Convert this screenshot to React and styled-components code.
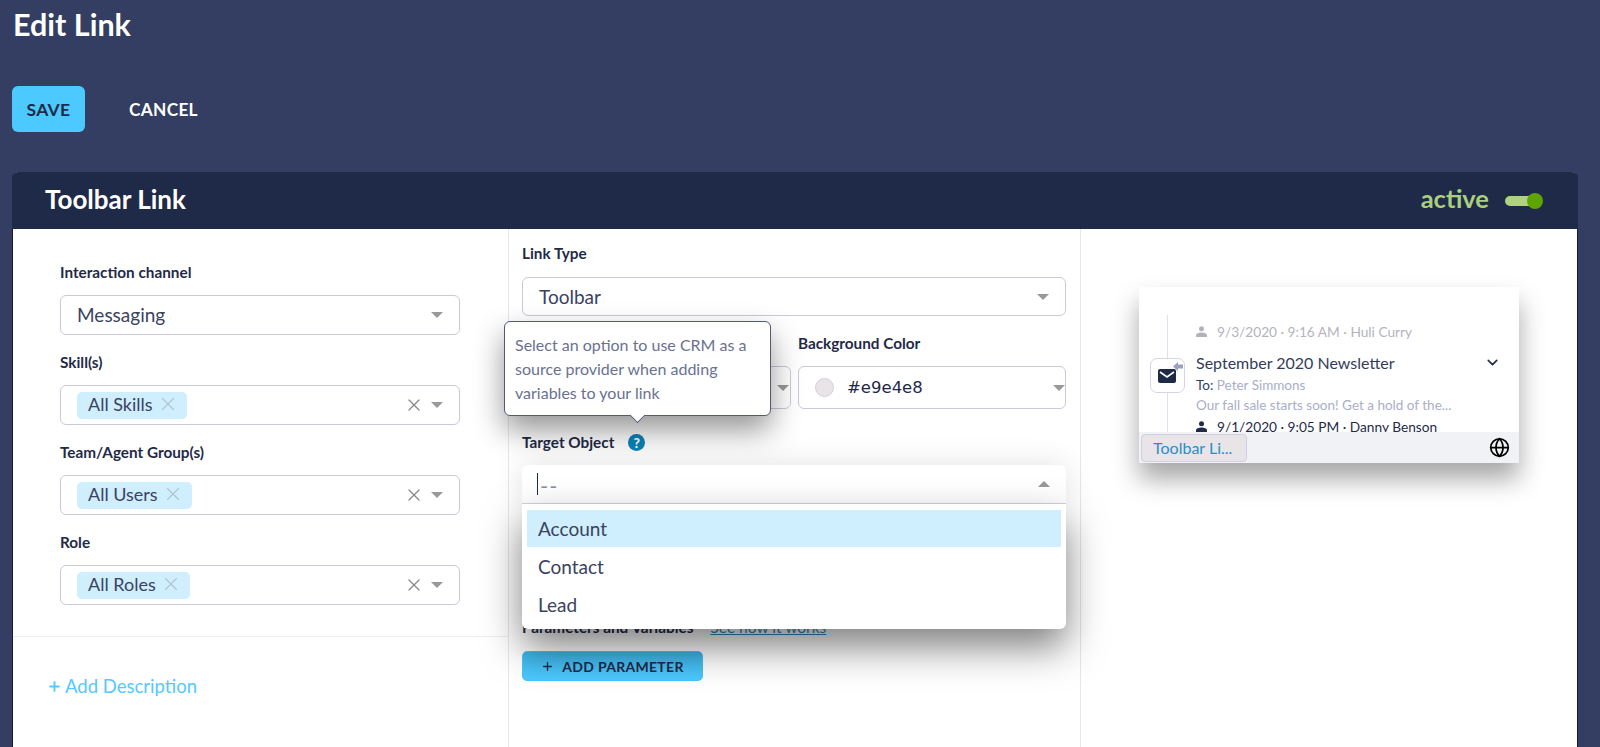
import React from "react";
import styled, { createGlobalStyle } from "styled-components";
import { X, Plus, ChevronDown, Globe } from "lucide-react";

const GlobalStyle = createGlobalStyle`
  html, body {
    margin: 0;
    height: 100%;
    overflow: hidden;
    background: #343e62;
    font-family: "Lato", "Noto Sans", sans-serif;
    color: #1f2a48;
  }
  #root { height: 100%; }
`;

const Page = styled.div`
  height: 747px;
  display: flex;
  flex-direction: column;
  padding: 6px 22px 0 12px;
  box-sizing: border-box;
  background: #343e62;
`;

const Title = styled.h1`
  margin: 0 0 44px 1px;
  font-size: 30.5px;
  line-height: 36px;
  font-weight: 700;
  color: #fff;
`;

const Actions = styled.div`
  display: flex;
  align-items: center;
  gap: 44px;
  margin-bottom: 40px;
`;

const SaveButton = styled.button`
  width: 73px;
  height: 46px;
  border: 0;
  border-radius: 6px;
  background: #4cc9ff;
  color: #1f2a48;
  font: 700 17.5px "Lato", sans-serif;
  letter-spacing: 0.3px;
  padding: 0;
`;

const CancelButton = styled.button`
  border: 0;
  background: none;
  color: #fff;
  font: 700 17.3px "Lato", sans-serif;
  letter-spacing: 0.3px;
  padding: 0;
`;

const Card = styled.section`
  flex: 1;
  min-height: 0;
  display: flex;
  flex-direction: column;
  border-radius: 6px 6px 0 0;
  background: #fff;
  border: solid #141d3d;
  border-width: 0 1px;
`;

const CardHeader = styled.header`
  height: 57px;
  flex: none;
  display: flex;
  align-items: center;
  justify-content: space-between;
  padding: 0 39px 0 33px;
  background: #1f2a48;
  border-radius: 6px 6px 0 0;
  margin: 0 -1px;
`;

const CardTitle = styled.h2`
  margin: 0 0 3px;
  font-size: 26px;
  font-weight: 700;
  color: #fff;
`;

const Status = styled.div`
  display: flex;
  align-items: center;
  gap: 16px;
`;

const StatusText = styled.span`
  margin-bottom: 5px;
  font-size: 25.5px;
  font-weight: 700;
  color: #a9cf7f;
`;

const Track = styled.span`
  position: relative;
  display: block;
  width: 34px;
  height: 10px;
  border-radius: 5px;
  background: #afd182;
`;

const Knob = styled.span`
  position: absolute;
  right: -4px;
  top: -3px;
  width: 16px;
  height: 16px;
  border-radius: 50%;
  background: #5fa500;
`;

const Columns = styled.div`
  flex: 1;
  min-height: 0;
  display: grid;
  grid-template-columns: 496px 572px 1fr;
`;

const LeftColumn = styled.div`
  border-right: 1px solid #e6e6ee;
`;

const FormBlock = styled.div`
  padding: 33px 48px 31px 47px;
  border-bottom: 1px solid #ececf2;
  display: flex;
  flex-direction: column;
  gap: 17px;
`;

const Field = styled.div`
  display: flex;
  flex-direction: column;
  gap: ${(p) => p.$gap || 13}px;
`;

const Label = styled.label`
  display: block;
  font-size: 15.3px;
  line-height: 20px;
  font-weight: 700;
  color: #1f2a48;
  white-space: nowrap;
`;

const Select = styled.div`
  height: ${(p) => p.$height || 40}px;
  box-sizing: border-box;
  display: flex;
  align-items: center;
  padding: 0 ${(p) => p.$padRight ?? 16}px 0 16px;
  border: 1px solid #c9c9da;
  border-radius: 6px;
  background: #fff;
  font-size: 19px;
  color: #3a4260;
`;

const Value = styled.span`
  flex: 1;
  margin-bottom: 1px;
  white-space: nowrap;
`;

const Arrow = styled.span`
  flex: none;
  width: 0;
  height: 0;
  border-left: 6.5px solid transparent;
  border-right: 6.5px solid transparent;
  border-top: 6px solid #999;
  ${(p) => p.$up && "border-top: 0; border-bottom: 6px solid #999;"}
`;

const ChipWrap = styled.div`
  flex: 1;
  display: flex;
`;

const Chip = styled.span`
  display: inline-flex;
  align-items: center;
  gap: 4px;
  height: 27px;
  box-sizing: border-box;
  padding: 0 8px 2px 11px;
  border-radius: 5px;
  background: #cfeefe;
  font-size: 18px;
  color: #3a4260;
  svg { color: #b0c3ce; }
`;

const ClearIcon = styled(X)`
  flex: none;
  color: #888;
  margin-right: 7px;
`;

const AddDescription = styled.a`
  display: flex;
  align-items: center;
  gap: 3px;
  padding: 39px 0 0 34px;
  font-size: 18.5px;
  line-height: 20px;
  color: #54c8ff;
`;

const MiddleColumn = styled.div`
  border-right: 1px solid #e6e6ee;
  padding: 14px 14px 0 13px;
  display: flex;
  flex-direction: column;
`;

const ColorRow = styled.div`
  display: grid;
  grid-template-columns: 269px 268px;
  gap: 7px;
  margin: 17px 0 23px;
`;

const Swatch = styled.span`
  flex: none;
  width: 19px;
  height: 19px;
  margin-right: 13px;
  border-radius: 50%;
  background: #e9e4e8;
  border: 1px solid #d3cfe0;
  box-sizing: border-box;
`;

const HexValue = styled(Value)`
  margin: 0;
  font-family: "DejaVu Sans", sans-serif;
  font-size: 16.5px;
  color: #1f2a48;
`;

const TargetLabel = styled.div`
  position: relative;
  display: flex;
  align-items: center;
  gap: 14px;
  margin-bottom: 13px;
`;

const HelpIcon = styled.span`
  width: 17px;
  height: 17px;
  border-radius: 50%;
  background: #0b84b8;
  color: #fff;
  font-size: 14px;
  line-height: 17px;
  font-weight: 900;
  text-align: center;
`;

const Tooltip = styled.div`
  position: absolute;
  left: -18px;
  bottom: calc(100% + 16px);
  width: 267px;
  box-sizing: border-box;
  padding: 11px 8px 10px 10px;
  border: 1px solid #54597a;
  border-radius: 6px;
  background: #fff;
  font-size: 16px;
  line-height: 24px;
  color: #6a7191;
  box-shadow: 0 14px 30px rgba(0, 0, 0, 0.42);
  z-index: 6;
  &::after {
    content: "";
    position: absolute;
    left: 127px;
    bottom: -6px;
    width: 10px;
    height: 10px;
    background: #fff;
    border: solid #54597a;
    border-width: 0 1px 1px 0;
    transform: rotate(45deg);
  }
`;

const Combo = styled.div`
  position: relative;
  z-index: 5;
  margin-bottom: 113px;
`;

const ComboInput = styled.div`
  height: 39px;
  box-sizing: border-box;
  display: flex;
  align-items: center;
  padding: 0 16px 0 15px;
  border-bottom: 1px solid #d5d3e0;
  border-radius: 6px 6px 0 0;
  background: #fff;
  box-shadow: 0 0 30px rgba(0, 0, 0, 0.12);
`;

const Caret = styled.span`
  width: 1px;
  height: 22px;
  background: #1f2a48;
  margin-right: 2px;
`;

const Dashes = styled(Value)`
  margin: 3px 0 0;
  font-size: 22px;
  letter-spacing: 1px;
  color: #8a8ea3;
`;

const Dropdown = styled.ul`
  position: absolute;
  top: 100%;
  left: 0;
  right: 0;
  margin: 0;
  padding: 6px 5px 5px;
  list-style: none;
  height: 125px;
  box-sizing: border-box;
  background: #fff;
  border-radius: 0 0 6px 6px;
  box-shadow: 0 18px 38px rgba(0, 0, 0, 0.5);
`;

const Option = styled.li`
  height: 37px;
  line-height: 37px;
  margin-bottom: 1px;
  padding-left: 11px;
  font-size: 19px;
  color: #3a4260;
  background: ${(p) => (p.$active ? "#cfeefe" : "transparent")};
`;

const ParamsRow = styled.div`
  display: flex;
  align-items: center;
  gap: 17px;
  margin-bottom: 14px;
`;

const HowLink = styled.a`
  font-size: 15.5px;
  line-height: 20px;
  color: #2e8bbd;
  text-decoration: underline;
`;

const AddParameter = styled.button`
  align-self: flex-start;
  width: 181px;
  height: 30px;
  display: flex;
  align-items: center;
  justify-content: center;
  gap: 8px;
  padding: 0;
  border: 1px solid #45c4fb;
  border-radius: 5px;
  background: linear-gradient(#3fb4e6, #4cc9ff);
  color: #1f2a48;
  font: 700 14px "Lato", sans-serif;
  letter-spacing: 0.3px;
`;

const RightColumn = styled.div`
  padding: 58px 0 0 58px;
`;

const Preview = styled.div`
  width: 380px;
  height: 176px;
  display: flex;
  flex-direction: column;
  background: #fff;
  box-shadow: 0 16px 24px rgba(0, 0, 0, 0.35);
`;

const PreviewBody = styled.div`
  flex: 1;
  min-height: 0;
  overflow: hidden;
  display: grid;
  grid-template-columns: 36px 1fr;
  gap: 11px;
  padding-left: 10px;
`;

const Gutter = styled.div`
  position: relative;
  display: flex;
  justify-content: center;
  padding-top: 71px;
  &::before {
    content: "";
    position: absolute;
    top: 28px;
    bottom: 0;
    left: 18px;
    width: 1px;
    background: #e0e0ea;
  }
`;

const MailBox = styled.div`
  position: relative;
  width: 35px;
  height: 35px;
  box-sizing: border-box;
  border: 1px solid #d5d5e6;
  border-radius: 7px;
  background: #fff;
`;

const PreviewContent = styled.div`
  display: flex;
  flex-direction: column;
`;

const CutRow = styled.div`
  margin: -15px 0 29px;
  height: 20px;
  font-size: 13.5px;
  line-height: 20px;
  color: #c5c7d4;
`;

const MetaRow = styled.div`
  display: flex;
  align-items: center;
  gap: 10px;
  height: 20px;
  flex: none;
  font-size: 13.7px;
  white-space: nowrap;
  color: ${(p) => (p.$muted ? "#b3b4ba" : "#1f2a48")};
  margin-top: ${(p) => p.$top || 0}px;
`;

const TitleRow = styled.div`
  display: flex;
  align-items: center;
  justify-content: space-between;
  height: 24px;
  flex: none;
  margin-top: 9px;
  padding-right: 18px;
  font-size: 16px;
  color: #343c5a;
`;

const ToLine = styled.div`
  height: 20px;
  flex: none;
  margin-top: 1px;
  font-size: 13.5px;
  line-height: 20px;
  color: #343c5a;
  span { color: #a9aec9; }
`;

const SnippetLine = styled.div`
  height: 20px;
  flex: none;
  font-size: 13.5px;
  line-height: 20px;
  color: #a9aec9;
  white-space: nowrap;
`;

const BottomBar = styled.div`
  height: 31px;
  flex: none;
  display: flex;
  align-items: center;
  justify-content: space-between;
  padding: 0 9px 0 2px;
  background: #f1f2f5;
`;

const BarLink = styled.div`
  width: 106px;
  height: 28px;
  box-sizing: border-box;
  padding-left: 11px;
  border: 1px solid #cfd0e2;
  border-radius: 4px;
  background: #e9e4e8;
  font-size: 16px;
  line-height: 26px;
  color: #2a8fc7;
`;

function PersonIcon({ color }) {
  return (
    <svg width="11" height="11" viewBox="0 0 11 11" fill={color}>
      <circle cx="5.5" cy="2.8" r="2.5" />
      <path d="M0 11V9.4C0 7.6 3 6.6 5.5 6.6S11 7.6 11 9.4V11Z" />
    </svg>
  );
}

function MailIcon() {
  return (
    <svg width="33" height="33" viewBox="0 0 33 33">
      <path d="M22 7.5L27 3V5.5H32V9.5H27V12Z" fill="#9aa0c0" />
      <path d="M7 12A2 2 0 0 1 9 10H23A2 2 0 0 1 25 12V22A2 2 0 0 1 23 24H9A2 2 0 0 1 7 22Z" fill="#1f2a48" />
      <path d="M9 13L16 18L23 13" fill="none" stroke="#fff" strokeWidth="1.6" />
    </svg>
  );
}

function ChipSelect({ label }) {
  return (
    <Select>
      <ChipWrap>
        <Chip>
          {label}
          <X size={22} strokeWidth={1.25} />
        </Chip>
      </ChipWrap>
      <ClearIcon size={20} strokeWidth={1.5} />
      <Arrow />
    </Select>
  );
}

export default function App() {
  return (
    <Page>
      <GlobalStyle />
      <Title>Edit Link</Title>
      <Actions>
        <SaveButton>SAVE</SaveButton>
        <CancelButton>CANCEL</CancelButton>
      </Actions>
      <Card>
        <CardHeader>
          <CardTitle>Toolbar Link</CardTitle>
          <Status>
            <StatusText>active</StatusText>
            <Track>
              <Knob />
            </Track>
          </Status>
        </CardHeader>
        <Columns>
          <LeftColumn>
            <FormBlock>
              <Field>
                <Label>Interaction channel</Label>
                <Select>
                  <Value>Messaging</Value>
                  <Arrow />
                </Select>
              </Field>
              <Field>
                <Label>Skill(s)</Label>
                <ChipSelect label="All Skills" />
              </Field>
              <Field>
                <Label>Team/Agent Group(s)</Label>
                <ChipSelect label="All Users" />
              </Field>
              <Field>
                <Label>Role</Label>
                <ChipSelect label="All Roles" />
              </Field>
            </FormBlock>
            <AddDescription>
              <Plus size={15} strokeWidth={3} />
              Add Description
            </AddDescription>
          </LeftColumn>

          <MiddleColumn>
            <Field $gap={14}>
              <Label>Link Type</Label>
              <Select $height={39}>
                <Value>Toolbar</Value>
                <Arrow />
              </Select>
            </Field>
            <ColorRow>
              <Field>
                <Label>&nbsp;</Label>
                <Select $height={43} $padRight={1}>
                  <Value />
                  <Arrow />
                </Select>
              </Field>
              <Field>
                <Label>Background Color</Label>
                <Select $height={43} $padRight={0}>
                  <Swatch />
                  <HexValue>#e9e4e8</HexValue>
                  <Arrow />
                </Select>
              </Field>
            </ColorRow>
            <TargetLabel>
              <Label>Target Object</Label>
              <HelpIcon>?</HelpIcon>
              <Tooltip>
                Select an option to use CRM as a source provider when adding variables to your link
              </Tooltip>
            </TargetLabel>
            <Combo>
              <ComboInput>
                <Caret />
                <Dashes>--</Dashes>
                <Arrow $up />
              </ComboInput>
              <Dropdown>
                <Option $active>Account</Option>
                <Option>Contact</Option>
                <Option>Lead</Option>
              </Dropdown>
            </Combo>
            <ParamsRow>
              <Label>Parameters and Variables</Label>
              <HowLink>See how it works</HowLink>
            </ParamsRow>
            <AddParameter>
              <Plus size={13} strokeWidth={2.5} />
              ADD PARAMETER
            </AddParameter>
          </MiddleColumn>

          <RightColumn>
            <Preview>
              <PreviewBody>
                <Gutter>
                  <MailBox>
                    <MailIcon />
                  </MailBox>
                </Gutter>
                <PreviewContent>
                  <CutRow>Peter Simmons</CutRow>
                  <MetaRow $muted>
                    <PersonIcon color="#b3b4ba" />
                    9/3/2020 · 9:16 AM · Huli Curry
                  </MetaRow>
                  <TitleRow>
                    September 2020 Newsletter
                    <ChevronDown size={17} strokeWidth={2.25} color="#1f2a48" />
                  </TitleRow>
                  <ToLine>
                    To: <span>Peter Simmons</span>
                  </ToLine>
                  <SnippetLine>Our fall sale starts soon! Get a hold of the...</SnippetLine>
                  <MetaRow $top={1}>
                    <PersonIcon color="#1f2a48" />
                    9/1/2020 · 9:05 PM · Danny Benson
                  </MetaRow>
                </PreviewContent>
              </PreviewBody>
              <BottomBar>
                <BarLink>Toolbar Li...</BarLink>
                <Globe size={21} strokeWidth={2} color="#000" />
              </BottomBar>
            </Preview>
          </RightColumn>
        </Columns>
      </Card>
    </Page>
  );
}
